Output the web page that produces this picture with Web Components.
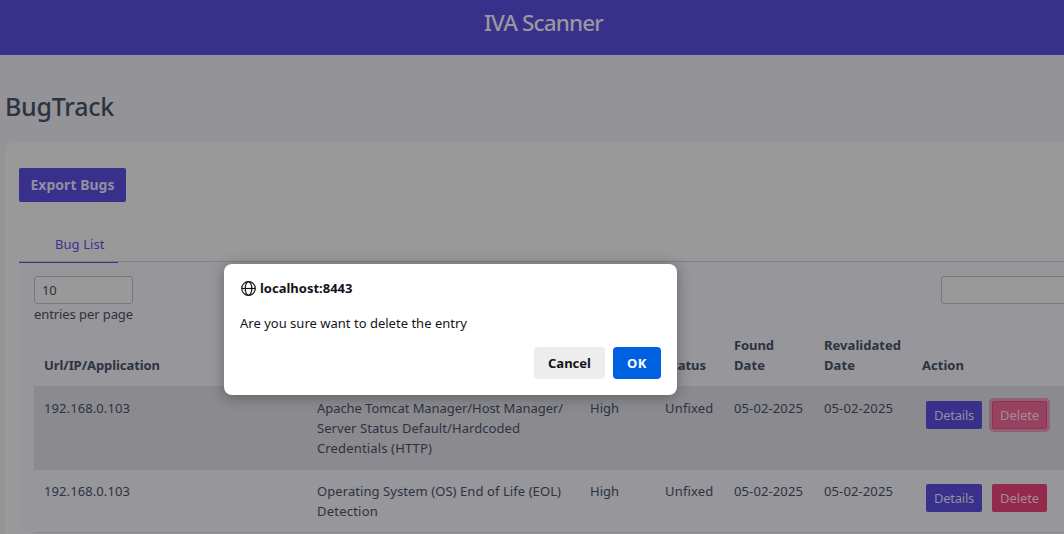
<!DOCTYPE html>
<html lang="en">
<head>
<meta charset="utf-8">
<title>IVA Scanner</title>
<style>
body{margin:0;height:534px;overflow:hidden;background:#949398;font:13px/20px "Noto Sans","Open Sans",sans-serif;color:#2c3340}
</style>
</head>
<body>
<iva-app></iva-app>
<script>
const define=(name,html,setup)=>{
  const t=document.createElement('template');t.innerHTML=html;
  customElements.define(name,class extends HTMLElement{
    constructor(){super();this.attachShadow({mode:'open'}).append(t.content.cloneNode(true));}
    connectedCallback(){if(setup)setup(this,this.shadowRoot);}
  });
};

/* One line of text, tracked so that it spans the width given in "w". */
define('fit-text','<style>:host{display:block;white-space:nowrap}span{display:inline-block}</style><span><slot></slot></span>',(el,root)=>{
  const s=root.querySelector('span'),w=+el.getAttribute('w'),n=el.textContent.length;
  s.style.letterSpacing='0px';
  s.style.letterSpacing=(w-s.getBoundingClientRect().width)/n+'px';
});

define('app-bar',`<style>
:host{display:flex;justify-content:center;height:55px;background:#38308a;color:#9a979f;box-sizing:border-box;padding:8px 0 0 23px;font-size:22.5px;line-height:30px;font-weight:500}
</style><slot></slot>`);

define('ui-button',`<style>
:host{display:flex;align-items:center;justify-content:center;box-sizing:border-box;height:28px;width:56px;border-radius:2px;background:#38308a;color:#928fa2;flex:none}
:host([kind=export]){width:107px;height:34px;font-size:14px;font-weight:700}
:host([kind=delete]){width:55px;background:#932a4b;color:#a58b98}
:host([focused]){background:#964260;border:1px solid #91304f;box-shadow:0 0 0 3px #8f6274}
:host([kind=cancel]){width:71px;height:32px;border-radius:4px;background:#ededee;color:#15141a;font-weight:700}
:host([kind=ok]){width:48px;height:32px;border-radius:4px;background:#0061e0;color:#fbfbfe;font-weight:700}
</style><slot></slot>`);

define('tab-bar',`<style>
:host{display:flex;height:32px;border-bottom:1px solid #808085}
div{width:99px;height:33px;border-bottom:1px solid #38308a;padding:4px 0 0 36px;box-sizing:border-box;color:#3a3190;margin-bottom:-1px;position:relative;top:1px;line-height:20px}
</style><div><slot></slot></div>`);

define('text-box',`<style>
:host{display:block;box-sizing:border-box;height:28px;width:99px;border:1px solid #777681;border-radius:3px;background:#999;padding:3px 0 0 7px;line-height:20px}
:host([wide]){width:200px}
</style><slot></slot>`);

define('table-row',`<style>
:host{display:grid;grid-template-columns:273px 273px 75px 69px 90px 98px 1fr;padding:11px 0 11px 10px;box-sizing:border-box;border-bottom:1px solid #88878c}
:host([head]){height:69px;align-items:end;font-weight:700;padding:0 0 11px 10px;border:0}
:host([shade]){background:#8b8a8f;height:84px;border-color:#8b8a8f;padding-top:12px}
</style><slot></slot>`);

define('row-actions',`<style>
:host{display:flex;gap:10px;padding:3px 0 0 4px}
</style><slot></slot>`);

define('bug-table',`<style>
:host{display:block}
</style>
<table-row head>
<fit-text w="116">Url/IP/Application</fit-text><span></span><span></span><fit-text w="41">Status</fit-text>
<div><fit-text w="40">Found</fit-text><fit-text w="31">Date</fit-text></div>
<div><fit-text w="77">Revalidated</fit-text><fit-text w="31">Date</fit-text></div>
<fit-text w="42">Action</fit-text>
</table-row>
<table-row shade>
<fit-text w="86">192.168.0.103</fit-text>
<div><fit-text w="246">Apache Tomcat Manager/Host Manager/</fit-text><fit-text w="203">Server Status Default/Hardcoded</fit-text><fit-text w="115">Credentials (HTTP)</fit-text></div>
<fit-text w="29">High</fit-text><fit-text w="48.5">Unfixed</fit-text><fit-text w="69">05-02-2025</fit-text><fit-text w="69">05-02-2025</fit-text>
<row-actions><ui-button><fit-text w="40">Details</fit-text></ui-button><ui-button kind="delete" focused><fit-text w="39">Delete</fit-text></ui-button></row-actions>
</table-row>
<table-row>
<fit-text w="86">192.168.0.103</fit-text>
<div><fit-text w="244">Operating System (OS) End of Life (EOL)</fit-text><fit-text w="61">Detection</fit-text></div>
<fit-text w="29">High</fit-text><fit-text w="48.5">Unfixed</fit-text><fit-text w="69">05-02-2025</fit-text><fit-text w="69">05-02-2025</fit-text>
<row-actions><ui-button><fit-text w="40">Details</fit-text></ui-button><ui-button kind="delete"><fit-text w="39">Delete</fit-text></ui-button></row-actions>
</table-row>`);

define('confirm-dialog',`<style>
:host{position:absolute;left:224px;top:264px;width:453px;height:131px;box-sizing:border-box;padding:14px 16px 16px;background:#fff;border-radius:8px;box-shadow:0 2px 14px rgba(30,30,35,.42);color:#15141a;display:flex;flex-direction:column}
.host{display:flex;align-items:center;gap:4px;font-weight:700;height:20px}
svg{display:block;margin:1px 0 0 1px}
.msg{margin-top:15px}
.buttons{margin-top:auto;display:flex;gap:8px;justify-content:flex-end}
</style>
<div class="host"><svg width="15" height="15" viewBox="0 0 15 15" fill="none" stroke="#15141a" stroke-width="1.2"><circle cx="7.5" cy="7.5" r="6.8"/><ellipse cx="7.5" cy="7.5" rx="3.3" ry="6.8"/><path d="M.7 7.5h13.6"/></svg><fit-text w="92.5">localhost:8443</fit-text></div>
<div class="msg"><fit-text w="227">Are you sure want to delete the entry</fit-text></div>
<div class="buttons"><ui-button kind="cancel"><fit-text w="43">Cancel</fit-text></ui-button><ui-button kind="ok"><fit-text w="20">OK</fit-text></ui-button></div>`);

define('iva-app',`<style>
:host{display:block;position:relative;height:534px;overflow:hidden}
h1{margin:0;padding:35px 0 0 5px;height:53px;font-size:25px;line-height:32px;font-weight:500}
.card{background:#999;margin-left:5px;border-radius:6px 0 0 0;padding:25px 0 0 14px;height:400px}
tab-bar{margin-top:27px}
.panel{background:#97969a;padding:14px 0 0 15px}
.tools{display:flex;justify-content:space-between;align-items:flex-start;height:41px}
.tools text-box[wide]{margin-right:-77px}
</style>
<app-bar><fit-text w="119">IVA Scanner</fit-text></app-bar>
<h1><fit-text w="109">BugTrack</fit-text></h1>
<div class="card">
<ui-button kind="export"><fit-text w="84">Export Bugs</fit-text></ui-button>
<tab-bar><fit-text w="49.5">Bug List</fit-text></tab-bar>
<div class="panel">
<div class="tools"><div><text-box><fit-text w="14.5">10</fit-text></text-box><fit-text w="99">entries per page</fit-text></div><text-box wide></text-box></div>
<bug-table></bug-table>
</div></div>
<confirm-dialog></confirm-dialog>`);
</script>
</body>
</html>
